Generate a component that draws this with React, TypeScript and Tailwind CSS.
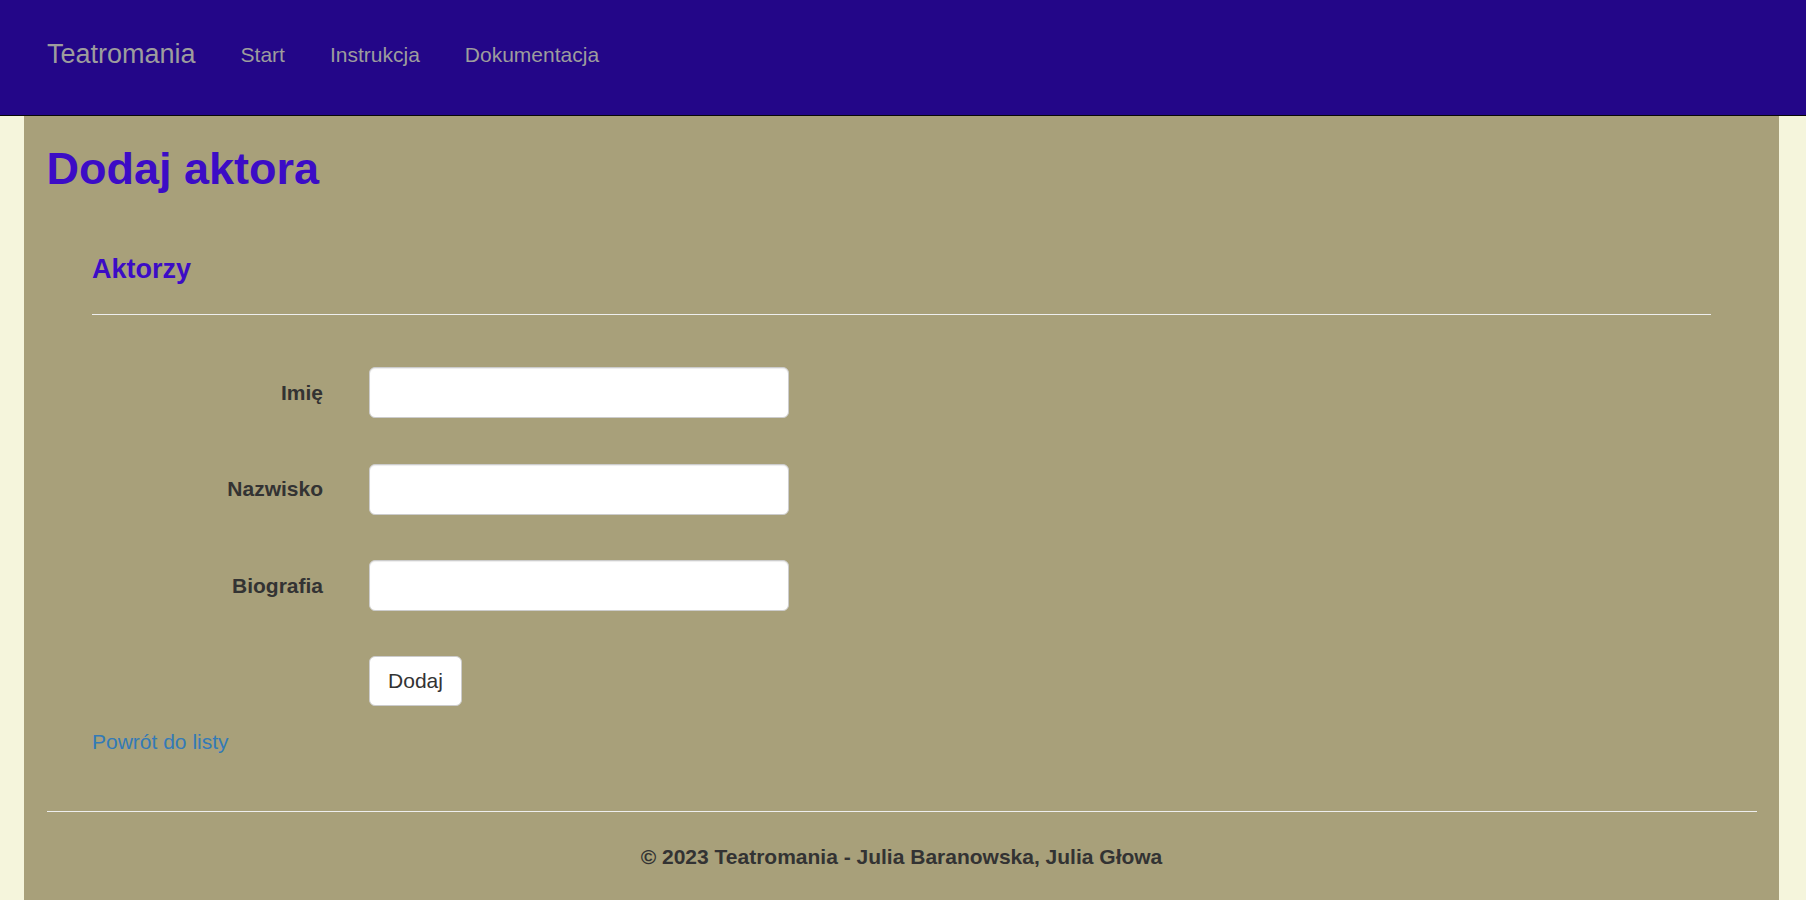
import React from 'react';

const App = () => {
  const links = ['Start', 'Instrukcja', 'Dokumentacja'];
  const fields = ['Imię', 'Nazwisko', 'Biografia'];

  return (
    <div className="min-h-screen bg-[#f5f5dc] font-['Liberation_Sans',Arial,sans-serif] text-[21px] text-[#333]">
      {/* Top navbar */}
      <nav className="h-[116px] bg-[#230688] border-b border-[#080808] flex items-baseline pl-[47px] pt-[39px]">
        <a className="text-[27px] leading-[30px] text-[#9d9d9d] mr-[45px]">Teatromania</a>
        <ul className="flex items-baseline gap-[45px] -translate-y-[1px]">
          {links.map((l) => (
            <li key={l}>
              <a className="text-[21px] leading-[30px] text-[#9d9d9d]">{l}</a>
            </li>
          ))}
        </ul>
      </nav>

      {/* Main container */}
      <div className="ml-[24px] w-[1755px] bg-[#a8a07a] px-[22.5px] pb-[40px]">
        <h2 className="pt-[28px] text-[45px] leading-[50px] font-bold text-[#3c0cc6]">Dodaj aktora</h2>

        <div className="px-[45.5px]">
          <h4 className="mt-[60px] text-[27px] leading-[30px] font-bold text-[#3c0cc6]">Aktorzy</h4>
          <hr className="mt-[30px] border-0 border-t border-[#eeeeee]" />

          <form className="mt-[52px] flex flex-col gap-[45.5px]">
            {fields.map((f) => (
              <div key={f} className="flex items-center h-[51px]">
                <label className="w-[231px] text-right font-bold text-[21px]">{f}</label>
                <input
                  type="text"
                  className="ml-[46px] w-[420px] h-[51px] bg-white border border-[#cccccc] rounded-[6px] shadow-[inset_0_1px_1px_rgba(0,0,0,0.075)] px-[18px]"
                />
              </div>
            ))}
            <div className="flex h-[50px] -mt-[1px]">
              <button
                type="button"
                className="ml-[277px] w-[93px] h-[50px] bg-white border border-[#cccccc] rounded-[6px] text-[21px] text-[#333]"
              >
                Dodaj
              </button>
            </div>
          </form>

          <div className="mt-[21.5px] leading-[30px]">
            <a className="text-[#337ab7]">Powrót do listy</a>
          </div>
        </div>

        <hr className="mt-[54px] border-0 border-t border-[#eeeeee]" />
        <footer className="mt-[30px] text-center font-bold leading-[30px]">
          © 2023 Teatromania - Julia Baranowska, Julia Głowa
        </footer>
      </div>
    </div>
  );
};

export default App;
